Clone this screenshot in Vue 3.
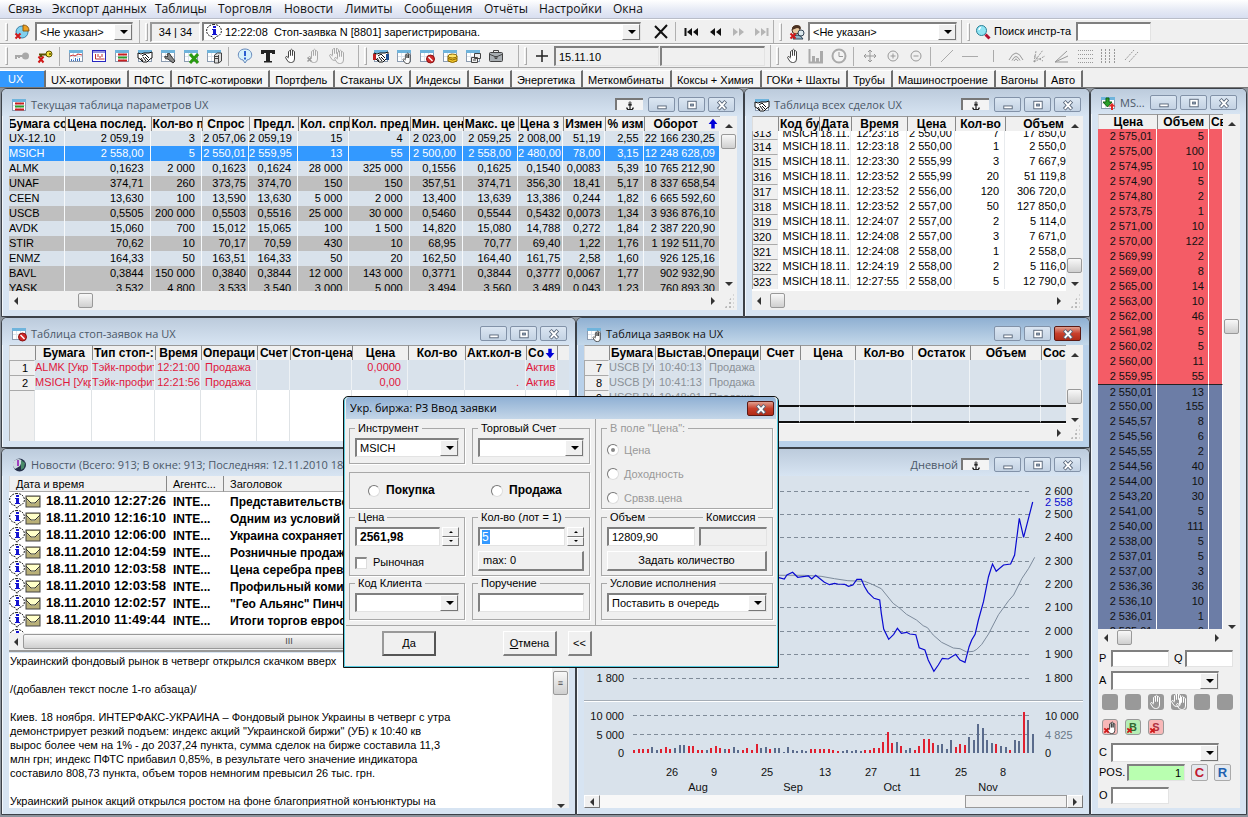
<script setup>
import { h } from 'vue'

const tbl = '<rect x="1.5" y="2.5" width="13" height="11" fill="#fff" stroke="#8b9bb0"/><path d="M5.5 5v8M9.500 5v8M2 8.500h12" stroke="#dde4ec"/><rect x="1" y="2" width="14" height="3" fill="#6fb4dc"/>'
const hand = '<path d="M5.5 9.5V3.5q1-1.5 2 0V7.5V2q1-1.5 2 0V7.5V3.5q1-1.5 2 0V11q0 3.5-3 3.5H7.5Q5 14.5 4 12L2.5 9.5q.5-1.5 1.5-.8l1.5 1.3"'
const cross = '<path d="M1.5 9.5l5 5m0-5l-5 5" stroke="#d01818" stroke-width="2" fill="none"/>'
const shake = '<path d="M1 5l3 1 3-1 5 0 3-1v6l-2 1-3 3H6l-3-3-2-1z" fill="#fff" stroke="#111"/><path d="M5 8l3-2 4 4M6 13l-2-3m5 3l-3-4m5 3l-3-3" stroke="#111" fill="none"/>'
const icons = {
  pie: '<circle cx="8" cy="8" r="6" fill="#7fd0ee" stroke="#3a7fa8"/><path d="M9 7V1q6 0 6 6z" fill="#f0a020" stroke="#8a5a10"/>' + cross,
  user: '<circle cx="7" cy="6" r="4" fill="#e8c9a0" stroke="#4a3020"/><path d="M3 6q0-5 5-5 4 0 4 4L8 4z" fill="#4a3020"/><path d="M4 15q0-4 4-4t6 4z" fill="#8fb7c9" stroke="#345"/><circle cx="12" cy="9" r="3" fill="#dce9ee" stroke="#345"/>' + cross,
  lens: '<circle cx="6.5" cy="6.5" r="5" fill="#8fe4f4" stroke="#2a7f96"/><path d="M4 6q0-2 2-2.5" stroke="#fff" stroke-width="1.5" fill="none"/><path d="M10.5 10.5l4 4" stroke="#b01030" stroke-width="3"/>',
  keyoff: '<circle cx="11.5" cy="8" r="3.5" fill="#a8a8a8"/><path d="M1 8h8M2 8v3m3-3v2" stroke="#a8a8a8" stroke-width="2"/>',
  key: '<circle cx="12" cy="6" r="3" fill="#f4e23a" stroke="#5b5200"/><circle cx="13" cy="6" r="1" fill="#5b5200"/><path d="M2 6.5h7M4 7v2" stroke="#5b5200" stroke-width="2"/><path d="M1.5 8.5l5 6m0-6l-5 6" stroke="#d01818" stroke-width="2"/>',
  chart: tbl + '<path d="M2 8l3-1 2 1 3-2 4 1" stroke="#d03030" fill="none"/><path d="M3.5 13v-2m2 2v-1m2 1v-3m2 3v-2m2 2v-3" stroke="#3a70c0"/>',
  chart2: '<rect x="1.5" y="2.5" width="13" height="11" fill="#fff" stroke="#2525c0"/><path d="M2 4h12" stroke="#2525c0"/><path d="M4.5 6v5h9M7 6v3m2-1v2m2-4v3" stroke="#c03030" fill="none"/>',
  quotes: tbl + '<path d="M4 6.5h9M4 12.5h9" stroke="#c82020" stroke-width="2"/><path d="M4 9.5h9" stroke="#2a9a2a" stroke-width="2"/>',
  deals: tbl + shake,
  dealsc: tbl + shake + '<path d="M0 6h3v6H0z" fill="#c02020"/><path d="M13 6h3v6h-3z" fill="#205090"/>',
  wrench: tbl + '<path d="M7 6q3-2 4 2l4 5-2 2-5-4q-4 0-3-3l2 1 1-1z" fill="#888" stroke="#333"/>',
  excel: tbl + '<path d="M7 6l8 9m0-9l-8 9" stroke="#2a9a10" stroke-width="3"/>',
  server: tbl + '<path d="M8.5 7l3-2h4v8l-3 2h-4z" fill="#ddd" stroke="#444"/><path d="M12.5 7v8M9 8.5h3M9 10.5h3" stroke="#444"/>',
  bubble: '<path d="M8 1C0 1-1 11 6 12l2 3 2-3C17 11 16 1 8 1z" fill="#d5f1fa" stroke="#68b"/><path d="M8 3v5M8 9.5v2" stroke="#2a5fd0" stroke-width="2"/>',
  text: '<path d="M1 2h14v4h-3V5h-2v8h2v1.5H4V13h2V5H4v1H1z" fill="#222"/>',
  hand: hand + ' fill="#fff" stroke="#444"/>',
  handoff: hand + ' fill="#f4f4f4" stroke="#aaa"/><path d="M1.5 9.5l4 4m0-4l-4 4" stroke="#999" stroke-width="1.5"/>',
  handsoff: '<g transform="translate(-2 -2)">' + hand + ' fill="#f4f4f4" stroke="#aaa"/></g><g transform="translate(3 1)">' + hand + ' fill="#f4f4f4" stroke="#aaa"/></g>',
  orders: tbl + '<g transform="translate(5 4) scale(.8)">' + hand + ' fill="#fff" stroke="#333"/></g>',
  stop: tbl + '<circle cx="11.5" cy="11" r="4" fill="#d02828" stroke="#8a1010"/><path d="M9.5 9l4 4" stroke="#fff" stroke-width="1.5"/>',
  coins: tbl + '<path d="M6 8v5q4.5 3 9 0V8z" fill="#f2c52a" stroke="#8a6500"/><ellipse cx="10.5" cy="8" rx="4.5" ry="2" fill="#ffe46a" stroke="#8a6500"/><path d="M6 10.5q4.5 3 9 0" stroke="#8a6500" fill="none"/>',
  print: tbl + '<path d="M9.5 5.5h6v5h-6zM6.5 9.5h6v5h-6z" fill="#eee" stroke="#444"/><path d="M8 12h3" stroke="#444"/>',
  bag: '<path d="M5.5 4V2.5h5V4" fill="none" stroke="#444"/><rect x="1.5" y="4.5" width="13" height="9" rx="1" fill="#a8aeb2" stroke="#444"/><path d="M1 6l7 3 7-3M7 8.5h2v2H7z" fill="none" stroke="#444"/>',
  plus: '<path d="M8 2v12M2 8h12" stroke="#222" stroke-width="1.5"/>',
  bars: '<path d="M1.5 1v13.5H15" stroke="#aaa" fill="none" stroke-width="2"/><path d="M5.5 14V8m4 6v-4m4 4V3" stroke="#aaa" stroke-width="3"/>',
  clock: '<circle cx="8" cy="8" r="6.5" fill="#f4f4f4" stroke="#aaa" stroke-width="2"/><path d="M8 4v4.5h4" stroke="#999" fill="none"/>',
  move: '<path d="M8 2v12M2 8h12M6 4l2-2 2 2M6 12l2 2 2-2M4 6L2 8l2 2M12 6l2 2-2 2" stroke="#999" fill="none"/>',
  zin: '<circle cx="8" cy="8" r="5" fill="none" stroke="#999"/><path d="M8 5.5v5M5.5 8h5" stroke="#999"/>',
  zout: '<circle cx="8" cy="8" r="5" fill="none" stroke="#999"/><path d="M5.5 8h5" stroke="#999"/>',
  l1: '<path d="M2 14L14 2" stroke="#aaa"/>',
  l2: '<path d="M0 8.5h16" stroke="#aaa"/>',
  l3: '<path d="M8.5 2v12" stroke="#aaa"/>',
  arcs: '<path d="M1 12q7-14 14 0M4 12.5q4-8 8 0M6 13q2-4 4 0" stroke="#999" fill="none"/>',
  fan1: '<path d="M3 14L12 2M3 14l2-11M3 14l11-6M3 8l9 5" stroke="#999" fill="none" stroke-dasharray="2 1"/>',
  fan2: '<path d="M1 14L13 3M1 14l13-6M1 14h13" stroke="#999" fill="none"/>',
  hl: '<path d="M1 2.5h15M1 6.5h15M1 10.5h15M1 14.5h15" stroke="#999" stroke-dasharray="1 1"/>',
  vl: '<path d="M1.5 1v14M5.5 1v14M9.5 1v14M14.5 1v14" stroke="#999" stroke-dasharray="2 1"/>',
  sl: '<path d="M2 12L11 2M6 14L15 4" stroke="#999" stroke-dasharray="2 1"/>',
  x: '<path d="M2 2l12 12M14 1L2 14" stroke="#111" stroke-width="2"/>',
  first: '<path d="M1.5 4v8" stroke="#111" stroke-width="2"/><path d="M8 4v8L3 8zM14 4v8L9 8z" fill="#111"/>',
  prev: '<path d="M8 4v8L3 8zM14 4v8L9 8z" fill="#111"/>',
  next: '<path d="M3 4v8l5-4zM9 4v8l5-4z" fill="#b5b5b5"/>',
  last: '<path d="M2 4v8l5-4zM8 4v8l5-4z" fill="#b5b5b5"/><path d="M14.5 4v8" stroke="#b5b5b5" stroke-width="2"/>',
  info: '<path d="M8 .5C-1 .5-2 11.500 6 12.500l2 3 2-3C18 11.500 17 .5 8 .5z" fill="#fff" stroke="#222" stroke-dasharray="2 1"/><path d="M7 2h3v2H7zM6 5h4v5h1v1H6v-1h1V6H6z" fill="#1515d0"/>',
  mail: '<rect x="1" y="3" width="14" height="11" fill="#b9b078" stroke="#444"/><path d="M2 4h12v3l-5 4H7L2 7z" fill="#ffffc8"/><path d="M1 5l5 5h4l5-5" stroke="#333" fill="none"/>',
  globe: '<circle cx="8.5" cy="8" r="6.5" fill="#26304a"/><path d="M3 4q5-4 8 0L9 9 4 12Q0 8 3 4z" fill="#cfd8e2"/><path d="M10 3l4 3-1 5-3 2z" fill="#4a8a6a"/><path d="M7 3v6" stroke="#a040c0" stroke-width="2"/>',
  glass: tbl + '<path d="M6 3h3v4h3l-4.500 5L3 7h3z" fill="#28a028" stroke="#126012"/><path d="M12 8l3.500 3.500H13V15h-2v-3.500H8.500z" fill="#e02828"/>',
  anchor: '<path d="M8 5v8M5.5 6.5h5M3.5 10q1 3.5 4.5 3.5t4.5-3.5" stroke="#111" stroke-width="1.5" fill="none"/><circle cx="8" cy="4" r="1.5" fill="none" stroke="#111"/>',
  min: '<rect x="3.5" y="8.5" width="9" height="3" fill="#fff" stroke="#59677a"/>',
  max: '<rect x="3.5" y="3.5" width="9" height="8" fill="#fff" stroke="#59677a"/><rect x="6.5" y="6.5" width="3" height="2" fill="#9db0c6" stroke="#59677a"/>',
  close: '<path d="M4 3.5l8 8.5m0-8.5L4 12" stroke="#59677a" stroke-width="4"/><path d="M4.5 4l7 7.5m0-7.5l-7 7.5" stroke="#fff" stroke-width="2"/>',
  up: '<path d="M8 2l5 6h-3v5H6V8H3z" fill="#0000d8"/>',
  down: '<path d="M8 14l5-6h-3V3H6v5H3z" fill="#0000d8"/>',
  k1: hand + ' fill="none" stroke="#fff"/>',
  k2: '<g transform="translate(-2 -2)">' + hand + ' fill="none" stroke="#fff"/></g><g transform="translate(3 1)">' + hand + ' fill="none" stroke="#fff"/></g>',
  kill: '<g transform="translate(2 1)">' + hand + ' fill="#fff" stroke="#333"/></g>' + cross,
  cross
}
const Ico = (p) => h('svg', { viewBox: '0 0 16 16', class: 'ico', 'aria-hidden': 'true', innerHTML: icons[p.n] })
Ico.props = ['n']

const menu = ['Связь', 'Экспорт данных', 'Таблицы', 'Торговля', 'Новости', 'Лимиты', 'Сообщения', 'Отчёты', 'Настройки', 'Окна']
const tabs = ['UX', 'UX-котировки', 'ПФТС', 'ПФТС-котировки', 'Портфель', 'Стаканы UX', 'Индексы', 'Банки', 'Энергетика', 'Меткомбинаты', 'Коксы + Химия', 'ГОКи + Шахты', 'Трубы', 'Машиностроение', 'Вагоны', 'Авто']
const toolsA = [['keyoff', 'key'], ['chart', 'chart2', 'quotes', 'deals', 'wrench', 'excel', 'server'], ['bubble', 'text', 'hand', 'handoff', 'handsoff']]
const toolsB = ['dealsc', 'orders', 'stop', 'coins', 'print', 'bag']
const toolsC = [['hand', 'bars', 'clock'], ['move', 'zin', 'zout'], ['l1', 'l2', 'l3', 'arcs', 'fan1', 'fan2', 'hl', 'vl', 'sl']]
const winButtons = ['min', 'max', 'close']

const quoteCols = [56, 85, 51, 47, 49, 51, 60, 53, 55, 45, 42, 38, 76]
const quoteHead = ['Бумага со', 'Цена послед.', 'Кол-во п', 'Спрос', 'Предл.', 'Кол. спр', 'Кол. пред', 'Мин. цен', 'Макс. це', 'Цена з', 'Измен', '% изм', 'Оборот']
const quotes = `UX-12.10|2 059,19|3|2 057,06|2 059,19|15|4|2 023,00|2 059,25|2 008,00|51,19|2,55|22 166 230,25
MSICH|2 558,00|5|2 550,01|2 559,95|13|55|2 500,00|2 558,00|2 480,00|78,00|3,15|12 248 628,09
ALMK|0,1623|2 000|0,1623|0,1624|28 000|325 000|0,1556|0,1625|0,1540|0,0083|5,39|10 765 212,90
UNAF|374,71|260|373,75|374,70|150|150|357,51|374,71|356,30|18,41|5,17|8 337 658,54
CEEN|13,630|100|13,590|13,630|5 000|2 000|13,400|13,639|13,386|0,244|1,82|6 665 592,60
USCB|0,5505|200 000|0,5503|0,5516|25 000|30 000|0,5460|0,5544|0,5432|0,0073|1,34|3 936 876,10
AVDK|15,060|700|15,012|15,065|100|1 500|14,820|15,080|14,788|0,272|1,84|2 387 220,90
STIR|70,62|10|70,17|70,59|430|10|68,95|70,77|69,40|1,22|1,76|1 192 511,70
ENMZ|164,33|50|163,51|164,33|50|20|162,50|164,40|161,75|2,58|1,60|926 125,16
BAVL|0,3844|150 000|0,3840|0,3844|12 000|143 000|0,3771|0,3844|0,3777|0,0067|1,77|902 932,90
YASK|3,532|4 800|3,533|3,540|3 000|5 000|3,494|3,560|3,489|0,043|1,23|760 893,30`.split('\n').map(r => r.split('|'))

const dealCols = [26, 41, 32, 56, 48, 50, 63]
const dealHead = ['', 'Код бу', 'Дата', 'Время', 'Цена', 'Кол-во', 'Объем']
const deals = `313|12:23:18|2 550,00|7|17 850,00
314|12:23:18|2 550,00|1|2 550,00
315|12:23:30|2 555,99|3|7 667,97
316|12:23:52|2 555,99|20|51 119,80
317|12:23:52|2 556,00|120|306 720,00
318|12:23:52|2 557,00|50|127 850,00
319|12:24:07|2 557,00|2|5 114,00
320|12:24:08|2 557,00|3|7 671,00
321|12:24:08|2 558,00|1|2 558,00
322|12:24:19|2 558,00|2|5 116,00
323|12:27:55|2 558,00|5|12 790,00`.split('\n').map(r => { const [n, ...x] = r.split('|'); return [n, 'MSICH', '18.11.', ...x] })

const stopCols = [26, 57, 63, 46, 56, 33, 62, 56, 57, 61, 31, 14]
const stopHead = ['', 'Бумага', 'Тип стоп-:', 'Время', 'Операци', 'Счет', 'Стоп-цена', 'Цена', 'Кол-во', 'Акт.кол-в', 'Со', '']
const stops = [
  ['1', 'ALMK [Укр', 'Тэйк-профит', '12:21:00', 'Продажа', '', '', '0,0000', '', '', 'Актив', ''],
  ['2', 'MSICH [Укр', 'Тэйк-профит', '12:21:56', 'Продажа', '', '', '0,00', '', '.', 'Актив', '']
]
const orderCols = [25, 46, 50, 55, 40, 55, 57, 58, 71, 27]
const orderHead = ['', 'Бумага', 'Выстав.', 'Операци', 'Счет', 'Цена', 'Кол-во', 'Остаток', 'Объем', 'Сос']
const orders = [['7', '10:40:13'], ['8', '10:41:13'], ['9', '10:48:01']].map(([n, t]) => [n, 'USCB [Укр', t, 'Продажа', '', '', '', '', '', ''])

const news = [['12:27:26', 'Представительство'], ['12:16:10', 'Одним из условий'], ['12:06:00', 'Украина сохраняет'], ['12:04:59', 'Розничные продажи'], ['12:03:58', 'Цена серебра превысила'], ['12:03:58', 'Профильный комитет'], ['12:02:57', '"Гео Альянс" Пинчука'], ['11:49:44', 'Итоги торгов евросоюза']]

const asks = '2 575,01|5 2 575,00|100 2 574,95|10 2 574,90|5 2 574,80|2 2 573,75|1 2 571,00|10 2 570,00|122 2 569,99|2 2 569,00|8 2 565,00|14 2 563,00|10 2 562,00|46 2 561,98|5 2 560,02|5 2 560,00|11 2 559,95|55'
const bids = '2 550,01|13 2 550,00|155 2 545,57|8 2 545,56|6 2 545,55|2 2 544,56|40 2 544,00|10 2 543,20|30 2 541,00|5 2 540,00|111 2 538,00|5 2 537,01|5 2 537,00|3 2 536,36|36 2 536,10|10 2 536,01|1 2 535,01|6'
const levels = (s) => s.match(/2 \d{3},\d\d\|\d+/g).map(r => r.split('|'))
const book = [...levels(asks).map(r => [...r, 'ask']), ...levels(bids).map(r => [...r, 'bid'])]

// Chart geometry, in the units of the SVG view box
const px = (x) => 570 + x / 2.987
const py = (y) => 445 + y / 3
const line = (s) => s.split(' ').map(p => { const [x, y] = p.split(','); return px(+x).toFixed(1) + ',' + py(+y).toFixed(1) }).join(' ')
const price = line('624,398 640,402 648,390 665,382 680,397 712,393 722,402 734,391 745,400 760,412 775,419 790,415 800,417 820,418 832,424 845,420 857,403 870,403 880,425 890,442 908,460 925,465 930,505 937,552 952,583 967,568 978,550 990,565 1005,562 1015,567 1033,569 1043,608 1060,615 1070,645 1087,679 1100,660 1112,640 1130,642 1152,628 1165,645 1180,652 1192,605 1200,585 1210,568 1220,525 1235,470 1250,395 1262,357 1273,379 1295,360 1316,357 1328,330 1342,220 1355,277 1382,171')
const average = line('624,391 700,391 750,394 790,401 830,407 880,409 905,419 930,431 945,450 965,475 985,490 1005,508 1035,525 1055,542 1068,548 1085,570 1110,592 1145,609 1165,611 1185,621 1205,619 1215,613 1230,598 1250,567 1280,509 1310,467 1325,450 1350,400 1370,370 1388,337')
const volumes = 'r10 r12 r12 r12 g17 g8 r12 r17 r12 g16 g23 g23 r20 r20 r10 r10 g8 r16 r20 r16 g13 r12 g17 g8 r10 r14 r8 r26 g14 g17 r12 g14 g14 g4 g17 g8 g5 g8 g5 r12 r12 r12 r12 r12 r8 r5 g5 g8 g5 g8 g5 r8 r8 r14 r14 r32 r62 r30 g32 r20 g8 g14 r8 r22 r43 r42 r30 g23 g28 g12 g40 r17 r28 r24 g48 g40 g86 g74 g40 g30 r28 g22 g18 r10 g38 g36 r122 g98 g57'.split(' ')
  .map((v, i, a) => ({ x: Math.round(px(192 + i * 1190 / (a.length - 1))) - 1, h: Math.max(1, Math.round(v.slice(1) / 3)), c: v[0] === 'r' ? '#e02030' : '#5a6b8c' }))
const scale = [[491, '2 600'], [514, '2 500'], [537, '2 400'], [561, '2 300'], [584, '2 200'], [607, '2 100'], [631, '2 000'], [654, '1 900'], [678, '1 800']]
const days = [[672, '26'], [714, '9'], [767, '25'], [825, '13'], [871, '27'], [915, '11'], [961, '25'], [1003, '8']]
const months = [[698, 'Aug'], [793, 'Sep'], [892, 'Oct'], [988, 'Nov']]
</script>

<template>
  <div class="app">
    <nav class="menu"><a v-for="m in menu" :key="m" href="#">{{ m }}</a></nav>

    <div class="bar">
      <div class="group g1"><i class="grip"></i><button class="tool" aria-label="Фирма"><Ico n="pie" /></button>
        <span class="combo"><select aria-label="Фирма"><option>&lt;Не указан&gt;</option></select></span></div>
      <div class="group g2"><i class="grip"></i><span class="count">34 | 34</span>
        <span class="combo msg"><Ico n="info" /><select aria-label="Сообщения"><option>12:22:08&nbsp; Стоп-заявка N [8801] зарегистрирована.</option></select></span>
        <button class="tool del" aria-label="Удалить"><Ico n="x" /></button><i class="sep"></i>
        <button v-for="b in ['first', 'prev', 'next', 'last']" :key="b" class="tool" :aria-label="b"><Ico :n="b" /></button></div>
      <div class="group g3"><i class="grip"></i><button class="tool" aria-label="Клиент"><Ico n="user" /></button>
        <span class="combo"><select aria-label="Клиент"><option>&lt;Не указан&gt;</option></select></span></div>
      <div class="group g4"><i class="grip"></i><Ico n="lens" /><label for="find">Поиск инстр-та</label><input id="find" class="field"></div>
    </div>

    <div class="bar second">
      <div class="group t1"><i class="grip"></i>
        <template v-for="(g, i) in toolsA" :key="i"><i v-if="i" class="sep"></i><button v-for="t in g" :key="t" class="tool" :aria-label="t"><Ico :n="t" /></button></template>
      </div>
      <div class="group t2"><i class="grip"></i><button v-for="t in toolsB" :key="t" class="tool" :aria-label="t"><Ico :n="t" /></button></div>
      <div class="group t3"><i class="grip"></i><button class="tool" aria-label="plus"><Ico n="plus" /></button>
        <input class="field gray" aria-label="Дата" value="15.11.10"><input class="field gray" aria-label="Значение"></div>
      <div class="group t4"><i class="grip"></i>
        <template v-for="(g, i) in toolsC" :key="i"><i v-if="i" class="sep"></i><button v-for="t in g" :key="t" class="tool" :aria-label="t"><Ico :n="t" /></button></template>
      </div>
    </div>

    <div class="tabs"><button v-for="(t, i) in tabs" :key="t" :class="{ on: !i }">{{ t }}</button></div>

    <main class="desk">
      <div class="left">
        <div class="row r1">
          <section class="win wide">
            <header><Ico n="quotes" /><h2>Текущая таблица параметров UX</h2><span class="pin"><Ico n="anchor" /></span>
              <button v-for="b in winButtons" :key="b" class="wb" :aria-label="b"><Ico :n="b" /></button></header>
            <div class="body">
              <div class="pane">
                <div class="clip">
                  <table class="quotes">
                    <colgroup><col v-for="(w, i) in quoteCols" :key="i" :style="{ width: w + 'px' }"></colgroup>
                    <thead><tr><th v-for="(t, i) in quoteHead" :key="i"><div :class="{ mid: [0, 3, 4].includes(i), sort: i === 12 }">{{ t }}<Ico v-if="i === 12" n="up" /></div></th></tr></thead>
                    <tbody><tr v-for="(r, i) in quotes" :key="i" :class="{ sel: i === 1, alt: i > 2 && i % 2 || i === 10 }"><td v-for="(c, j) in r" :key="j"><div>{{ c }}</div></td></tr></tbody>
                  </table>
                </div>
                <div class="hs"><i class="al"></i><i class="th a1"></i><i class="ar"></i></div>
              </div>
              <div class="vs"><i class="au"></i><i class="th v1"></i><i class="ad"></i><i class="size"></i></div>
            </div>
          </section>
          <section class="win">
            <header><Ico n="deals" /><h2>Таблица всех сделок UX</h2><span class="pin"><Ico n="anchor" /></span>
              <button v-for="b in winButtons" :key="b" class="wb" :aria-label="b"><Ico :n="b" /></button></header>
            <div class="body">
              <div class="pane">
                <div class="clip white">
                  <table class="deals">
                    <colgroup><col v-for="(w, i) in dealCols" :key="i" :style="{ width: w + 'px' }"></colgroup>
                    <thead><tr><th v-for="(t, i) in dealHead" :key="i"><div :class="{ mid: i > 2 && i < 6, end: i === 6 }">{{ t }}</div></th></tr></thead>
                    <tbody><tr v-for="r in deals" :key="r[0]"><td v-for="(c, j) in r" :key="j"><div>{{ c }}</div></td></tr></tbody>
                  </table>
                </div>
                <div class="hs"><i class="al"></i><i class="th"></i><i class="ar"></i></div>
              </div>
              <div class="vs"><i class="au"></i><i class="th v2"></i><i class="ad"></i><i class="size"></i></div>
            </div>
          </section>
        </div>

        <div class="row r2">
          <section class="win narrow">
            <header><Ico n="stop" /><h2>Таблица стоп-заявок на UX</h2>
              <button v-for="b in winButtons" :key="b" class="wb" :aria-label="b"><Ico :n="b" /></button></header>
            <div class="body">
              <div class="clip white">
                <table class="stops">
                  <colgroup><col v-for="(w, i) in stopCols" :key="i" :style="{ width: w + 'px' }"></colgroup>
                  <thead><tr><th v-for="(t, i) in stopHead" :key="i"><div :class="{ mid: [1, 3, 5, 7, 8].includes(i), sort: i === 10 }">{{ t }}<Ico v-if="i === 10" n="down" /></div></th></tr></thead>
                  <tbody><tr v-for="r in stops" :key="r[0]"><td v-for="(c, j) in r" :key="j"><div>{{ c }}</div></td></tr>
                    <tr class="rest"><td v-for="j in 12" :key="j"></td></tr></tbody>
                </table>
              </div>
            </div>
          </section>
          <section class="win active">
            <header><Ico n="orders" /><h2>Таблица заявок на UX</h2>
              <button v-for="b in winButtons" :key="b" class="wb" :class="{ red: b === 'close' }" :aria-label="b"><Ico :n="b" /></button></header>
            <div class="body">
              <div class="pane">
                <div class="clip white">
                  <table class="orders">
                    <colgroup><col v-for="(w, i) in orderCols" :key="i" :style="{ width: w + 'px' }"></colgroup>
                    <thead><tr><th v-for="(t, i) in orderHead" :key="i"><div :class="{ mid: i > 3 && i < 9, sort: i === 9 }">{{ t }}<Ico v-if="i === 9" n="down" /></div></th></tr></thead>
                    <tbody><tr v-for="r in orders" :key="r[0]"><td v-for="(c, j) in r" :key="j"><div>{{ c }}</div></td></tr>
                      <tr class="mark"><td v-for="j in 10" :key="j"><div></div></td></tr></tbody>
                  </table>
                </div>
                <div class="hs"><i class="al"></i><i class="th"></i><i class="ar"></i></div>
              </div>
              <div class="vs"><i class="au"></i><i class="th v4"></i><i class="ad"></i><i class="size"></i></div>
            </div>
          </section>
        </div>

        <div class="row r3">
          <section class="win narrow news">
            <header><Ico n="globe" /><h2>Новости (Всего: 913; В окне: 913; Последняя: 12.11.2010 18:52)</h2></header>
            <div class="col">
              <div class="list">
                <table>
                  <colgroup><col class="c1"><col class="c2"><col></colgroup>
                  <thead><tr><th>Дата и время</th><th>Агентс...</th><th>Заголовок</th></tr></thead>
                  <tbody><tr v-for="(n, i) in news" :key="i"><td><div><Ico n="info" /><Ico n="mail" /><time>18.11.2010 {{ n[0] }}</time></div></td><td>INTE...</td><td>{{ n[1] }}</td></tr>
                    <tr><td><div><Ico n="info" /></div></td><td></td><td></td></tr></tbody>
                </table>
              </div>
              <div class="hs"><i class="al"></i><i class="th long">III</i><i class="ar"></i></div>
              <div class="story">
                <article>
                  <p>Украинский фондовый рынок в четверг открылся скачком вверх</p>
                  <p>/(добавлен текст после 1-го абзаца)/</p>
                  <p>Киев. 18 ноября. ИНТЕРФАКС-УКРАИНА – Фондовый рынок Украины в четверг с утра<br>демонстрирует резкий подъем: индекс акций "Украинской биржи" (УБ) к 10:40 кв<br>вырос более чем на 1% - до 2037,24 пункта, сумма сделок на бирже составила 11,3<br>млн грн; индекс ПФТС прибавил 0,85%, в результате чего значение индикатора<br>составило 808,73 пункта, объем торов немногим превысил 26 тыс. грн.</p>
                  <p>Украинский рынок акций открылся ростом на фоне благоприятной конъюнктуры на</p>
                </article>
                <div class="vs"><i class="au"></i><i class="th v5">≡</i><i class="ad"></i></div>
              </div>
            </div>
          </section>
          <section class="win chart">
            <header><h2></h2><span class="mode">Дневной</span><span class="pin"><Ico n="anchor" /></span>
              <button v-for="b in winButtons" :key="b" class="wb" :aria-label="b"><Ico :n="b" /></button></header>
            <div class="col">
              <svg class="plot" viewBox="584 476 499 318" preserveAspectRatio="xMinYMin meet">
                <g class="dash"><path v-for="s in scale" :key="s[0]" :d="`M633 ${s[0] + .5}H1032`" /><path d="M633 715.5H1032M633 734.5H1032" /></g>
                <text v-for="s in scale" :key="s[1]" x="1045" :y="s[0] + 4">{{ s[1] }}</text>
                <rect x="1043" y="495" width="38" height="13" fill="#d9e2eb" /><text x="1045" y="506" class="now">2 558</text>
                <text x="624" y="682" class="r">1 800</text>
                <polyline :points="average" stroke="#7d8b9c" /><polyline :points="price" stroke="#0a0ad0" stroke-width="1.2" />
                <path d="M584 700.5H1083" stroke="#a5adb6" /><path d="M584 701.5H1083" stroke="#fff" />
                <text x="624" y="720" class="r">10 000</text><text x="624" y="739" class="r">5 000</text><text x="624" y="757" class="r">0</text>
                <text x="1045" y="720">10 000</text><text x="1045" y="739" class="dim">4 825</text><text x="1045" y="757">0</text>
                <rect v-for="(v, i) in volumes" :key="i" :x="v.x" :y="753 - v.h" width="2" :height="v.h" :fill="v.c" />
                <text v-for="d in days" :key="d[0]" :x="d[0]" y="776" class="m">{{ d[1] }}</text>
                <text v-for="d in months" :key="d[1]" :x="d[0]" y="791" class="m">{{ d[1] }}</text>
              </svg>
              <div class="hs classic"><i class="bx"><i class="al"></i></i><i class="th"></i><i class="bx"><i class="ar"></i></i></div>
            </div>
          </section>
        </div>
      </div>

      <section class="win book">
        <header><Ico n="glass" /><h2>MS...</h2>
          <button v-for="b in winButtons" :key="b" class="wb" :aria-label="b"><Ico :n="b" /></button></header>
        <div class="body depth">
          <div class="clip">
            <table>
              <colgroup><col class="b1"><col class="b2"><col class="b3"></colgroup>
              <thead><tr><th><div class="mid">Цена</div></th><th><div class="mid">Объем</div></th><th><div>Св</div></th></tr></thead>
              <tbody><tr v-for="(r, i) in book" :key="i" :class="r[2]"><td><div>{{ r[0] }}</div></td><td><div>{{ r[1] }}</div></td><td></td></tr></tbody>
            </table>
          </div>
          <div class="vs"><i class="au"></i><i class="th v6"></i><i class="ad"></i></div>
        </div>
        <div class="entry">
          <div class="hs"><i class="al"></i><i class="th"></i><i class="ar"></i></div>
          <div class="ln"><label for="fp">P</label><input id="fp" class="field w58"><label for="fq" class="q">Q</label><input id="fq" class="field w48"></div>
          <div class="ln a"><label for="fa">A</label><span class="combo w108"><select id="fa"><option></option></select></span></div>
          <div class="keys"><button v-for="i in 6" :key="i" :aria-label="'Кнопка ' + i"><Ico v-if="i === 3" n="k1" /><Ico v-if="i === 4" n="k2" /></button></div>
          <div class="keys small"><button class="p" aria-label="Снять"><Ico n="kill" /></button><button class="g">B<Ico n="cross" class="over" /></button><button class="p">S<Ico n="cross" class="over" /></button></div>
          <div class="ln c"><label for="fc">C</label><span class="combo w108"><select id="fc"><option></option></select></span></div>
          <div class="ln pos"><label for="fpos">POS.</label><input id="fpos" class="field w58 green" value="1"><button class="cr red">C</button><button class="cr blue">R</button></div>
          <div class="ln"><label for="fo">O</label><input id="fo" class="field w58"></div>
        </div>
      </section>
    </main>

    <form class="dialog" @submit.prevent>
      <header><h2>Укр. биржа: РЗ Ввод заявки</h2><button type="button" class="wb red" aria-label="Закрыть"><Ico n="close" /></button></header>
      <div class="dbody">
        <div class="dleft">
          <fieldset><legend><label for="ins">Инструмент</label></legend><span class="combo"><select id="ins"><option>MSICH</option></select></span></fieldset>
          <fieldset><legend><label for="acc">Торговый Счет</label></legend><span class="combo"><select id="acc"><option></option></select></span></fieldset>
          <div class="side"><label><input type="radio" name="side">Покупка</label><label><input type="radio" name="side">Продажа</label></div>
          <fieldset class="tall"><legend><label for="pr">Цена</label></legend>
            <div class="spin"><input id="pr" class="field b" value="2561,98"><span class="ud"><button type="button" aria-label="Больше"></button><button type="button" class="dn" aria-label="Меньше"></button></span></div>
            <label class="check"><input type="checkbox">Рыночная</label></fieldset>
          <fieldset class="tall"><legend><label for="qt">Кол-во (лот = 1)</label></legend>
            <div class="spin"><span class="field qty"><input id="qt" value="5"></span><span class="ud"><button type="button" aria-label="Больше"></button><button type="button" class="dn" aria-label="Меньше"></button></span></div>
            <button type="button" class="btn lft">max: 0</button></fieldset>
          <fieldset class="last"><legend><label for="cl">Код Клиента</label></legend><span class="combo"><select id="cl"><option></option></select></span></fieldset>
          <fieldset class="last"><legend><label for="rf">Поручение</label></legend><input id="rf" class="field"></fieldset>
        </div>
        <div class="dright">
          <fieldset class="kinds" disabled><legend>В поле "Цена":</legend>
            <label><input type="radio" name="kind" checked>Цена</label><label><input type="radio" name="kind">Доходность</label><label><input type="radio" name="kind">Срвзв.цена</label></fieldset>
          <fieldset class="vol"><legend><label for="vo">Объем</label></legend>
            <label class="com" for="co">Комиссия</label>
            <div class="two"><input id="vo" class="field" value="12809,90"><input id="co" class="field gray"></div>
            <button type="button" class="btn">Задать количество</button></fieldset>
          <fieldset class="last"><legend><label for="us">Условие исполнения</label></legend><span class="combo"><select id="us"><option>Поставить в очередь</option></select></span></fieldset>
        </div>
      </div>
      <footer><button class="btn ok"><u>Д</u>а</button><button type="button" class="btn"><u>О</u>тмена</button><button type="button" class="btn less">&lt;&lt;</button></footer>
    </form>
  </div>
</template>

<style>
body { margin: 0; background: #8d949c; }
</style>

<style scoped>
.app { position: relative; height: 100vh; display: flex; flex-direction: column; overflow: hidden; background: #f0f0f0; font: 11px/13px "Liberation Sans", Arial, sans-serif; color: #000; }
.app * { box-sizing: border-box; }
button, input, select { font: inherit; color: inherit; margin: 0; padding: 0; border: 0; border-radius: 0; background: none; min-width: 0; }
h2 { margin: 0; font: inherit; flex: 1; white-space: nowrap; overflow: hidden; }
i { display: block; font-style: normal; }
.ico { width: 16px; height: 16px; flex: none; display: block; }

.menu { flex: none; height: 19px; display: grid; grid-template-columns: 44px 103px 63px 66px 61px 59px 80px 55px 74px auto; padding-left: 8px; align-items: center; background: linear-gradient(#fff, #e8ecf6 50%, #d8def0); border-bottom: 1px solid #b9bdc8; font: 12px/16px "Open Sans", "Noto Sans", sans-serif; }
.menu a { color: #111; text-decoration: none; white-space: nowrap; }
.bar { flex: none; height: 25px; display: flex; border-bottom: 1px solid #a8a8a8; border-top: 1px solid #fff; }
.second { height: 24px; }
.group { display: flex; align-items: center; border-right: 1px solid #b0b0b0; padding-left: 5px; }
.grip { flex: none; width: 3px; height: 18px; border: 1px solid #aaa; border-top-color: #fff; border-left-color: #fff; margin-right: 2px; }
.sep { flex: none; width: 1px; height: 19px; background: #b0b0b0; margin: 0 4px 0 3px; }
.tool { flex: none; width: 23px; height: 22px; display: grid; place-items: center; }
.g1 { width: 140px; } .g1 .combo { width: 98px; margin-left: 2px; }
.g2 { width: 634px; } .del { margin-left: 8px; }
.count { width: 50px; height: 20px; line-height: 17px; text-align: center; border: solid; border-color: #999 #fff #fff #999; border-width: 2px 1px 1px 2px; margin-right: 2px; }
.msg { width: 439px; padding-left: 2px; }
.g3 { width: 188px; } .g3 .tool { margin-left: 1px; } .g3 .combo { width: 149px; }
.g4 { flex: 1; border: 0; gap: 3px; } .g4 .field { width: 75px; margin-left: 2px; } .g4 label { white-space: nowrap; }
.t1 { width: 359px; } .t2 { width: 160px; } .t3 { width: 252px; gap: 1px; } .t4 { flex: 1; border: 0; }
.t3 .field { width: 105px; height: 20px; }

.field { height: 19px; padding: 0 3px; background: #fff; border: solid; border-width: 2px 1px 1px 2px; border-color: #808080 #e3e3e3 #e3e3e3 #808080; }
.field.gray { background: #f0f0f0; }
.combo { position: relative; display: flex; height: 19px; background: #fff; border: solid; border-width: 2px 1px 1px 2px; border-color: #808080 #e3e3e3 #e3e3e3 #808080; }
.combo select { appearance: none; flex: 1; padding: 0 18px 0 3px; outline: 0; }
.combo::before { content: ""; position: absolute; right: 0; top: 0; bottom: 0; width: 16px; background: #f0f0f0; border: 1px solid; border-color: #fff #777 #777 #fff; pointer-events: none; }
.combo::after { content: ""; position: absolute; right: 4px; top: 6px; border: 4px solid transparent; border-top-color: #000; border-bottom: 0; pointer-events: none; }

.tabs { flex: none; display: flex; height: 20px; padding-top: 2px; border-bottom: 1px solid #777; }
.tabs button { text-align: left; padding: 3px 6px 0 5px; border-right: 2px solid #6f6f6f; white-space: nowrap; border-top: 1px solid #fff; background: #f4f4f4; }
.tabs .on { background: #3399ff; color: #fff; width: 46px; padding: 0 8px; }

.desk { flex: 1; min-height: 0; display: flex; padding: 0 1px 2px 1px; background: #8d949c; }
.left { flex: 1; min-width: 0; display: flex; flex-direction: column; }
.row { display: flex; min-height: 0; }
.r1 { flex: 0 0 229px; } .r2 { flex: 0 0 131px; } .r3 { flex: 1; }
.win { flex: 1; min-width: 0; display: flex; flex-direction: column; background: #d7e4f2; border: 1px solid #3c4148; border-radius: 6px 6px 0 0; padding: 0 6px 6px 7px; box-shadow: inset 1px 1px #f2f7fc; overflow: hidden; }
.wide { flex: 0 0 743px; } .narrow { flex: 0 0 575px; } .book { flex: 0 0 157px; }
.win > header { flex: none; height: 27px; padding: 4px 8px 0 9px; display: flex; align-items: center; gap: 3px; margin: 0 -6px 0 -7px; background: linear-gradient(#bccbdc, #d7e4f2); color: #4b5868; font: 11px/16px "Open Sans", "Noto Sans", sans-serif; }
.win > header h2 { padding-left: 1px; }
.active > header { background: linear-gradient(#8fb0d2, #c4d8ea); color: #111; }
.active { background: #b9d1ea; }
.wb { flex: none; width: 27px; height: 15px; display: grid; place-items: center; border: 1px solid #8292a8; border-radius: 2px; background: linear-gradient(#dbe6f2, #c3d2e3); }
.wb .ico { height: 15px; }
.wb.red { background: linear-gradient(#e0a090, #c8402c 50%, #b02c18); border-color: #5c1a14; }
.pin { flex: none; width: 28px; height: 12px; align-self: flex-start; margin: 5px 2px 0 0; background: #f4f4f4; border-top: 2px solid #777; border-left: 2px solid #777; display: grid; place-items: center; overflow: hidden; }
.pin .ico { width: 12px; height: 12px; }
.body { flex: 1; min-height: 0; display: flex; }
.pane, .col { flex: 1; min-width: 0; min-height: 0; display: flex; flex-direction: column; }
.clip { flex: 1; min-height: 0; min-width: 0; overflow: hidden; background: #d9e2eb; }
.white { background: #fff; }

table { border-collapse: separate; border-spacing: 0; table-layout: fixed; width: 100%; }
th, td { padding: 0; height: 15px; }
th { background: #f0f0f0; border-left: 1px solid #888; border-top: 1px solid #999; font-size: 12px; line-height: 14px; text-align: left; }
th:first-child { border-left-color: #ddd; }
th div { height: 14px; overflow: hidden; white-space: nowrap; padding-left: 1px; }
th .mid { display: flex; justify-content: center; padding: 0; }
th .end { text-align: right; padding-right: 4px; }
th .sort { display: flex; justify-content: space-between; } th .sort .ico { width: 14px; height: 14px; margin-left: auto; }
td div { height: 15px; line-height: 15px; overflow: hidden; white-space: nowrap; text-align: right; padding-right: 6px; }
.quotes th:last-child div { padding-left: 9px; }
.quotes td { background: #d9e2eb; border-right: 1px solid #f6f9fb; }
.quotes .alt td { background: #bfbfbf; }
.quotes .sel td { background: #3399ff; color: #fff; }
.quotes td:first-child div { text-align: left; padding: 0; }
.quotes td:nth-child(n+10) div, .quotes td:nth-child(4) div { padding-right: 4px; }
.quotes td:nth-child(10) div, .quotes td:nth-child(4) div { padding-right: 2px; }
.deals td { border-right: 1px solid #e8ebee; }
.deals td div { padding: 0 5px 0 2px; }
.deals td:first-child, .stops td:first-child, .orders td:first-child { background: #f0f0f0; border-left: 1px solid #aaa; border-top: 1px solid #aaa; height: 15px; }
.deals td:first-child div { height: 14px; line-height: 14px; text-align: left; padding: 0; }
.deals td:nth-child(2) div { text-align: right; padding: 0; }
.deals td:nth-child(3) div { text-align: left; padding: 0 0 0 1px; }
.deals td:nth-child(4) div { padding-right: 7px; }
.deals td:last-child { border: 0; } .deals td:last-child div { padding: 0; margin-right: -4px; }
.deals tbody tr:first-child td { height: 8px; border-top: 0; } .deals tbody tr:first-child td div { height: 8px; line-height: 4px; }
.stops td { background: #d9e2eb; border-right: 1px solid #eef2f5; color: #e0183c; }
.stops td:first-child div, .orders td:first-child div { height: 14px; line-height: 14px; padding-right: 6px; }
.stops td:first-child { color: #000; }
.stops td:nth-child(2) div, .stops td:nth-child(3) div, .stops td:nth-child(11) div, .orders td:nth-child(2) div { text-align: left; padding: 0; }
.stops td:nth-child(5) div, .orders td:nth-child(3) div, .orders td:nth-child(4) div { text-align: left; padding: 0 0 0 4px; }
.stops td:nth-child(4) div { padding: 0; }
.stops .rest td { height: 52px; background: #fff; border-right-color: #dfe3e6; }
.stops .rest td:first-child { background: #f0f0f0; }
.stops th .sort .ico { margin-left: -2px; }
.orders td { background: #d9e2eb; border-right: 1px solid #f0f4f7; color: #8b9197; }
.orders td:first-child { color: #000; }
.orders .mark td { border-top: 2px solid #111; border-bottom: 2px solid #111; height: 16px; }
.orders .mark div { height: 12px; }

.hs { flex: none; height: 17px; background: #f0f0f0; display: flex; align-items: center; justify-content: space-between; padding: 0 5px; }
.r1 .hs { height: 19px; }
.vs { flex: none; width: 17px; background: #f0f0f0; display: flex; flex-direction: column; align-items: center; padding-top: 8px; }
.al, .ar, .au, .ad { width: 0; height: 0; border: 4px solid transparent; flex: none; }
.al { border-right-color: #333; border-left: 0; } .ar { border-left-color: #333; border-right: 0; }
.au { border-bottom-color: #333; border-top: 0; } .ad { border-top-color: #333; border-bottom: 0; margin-top: auto; }
.th { flex: none; width: 15px; height: 15px; border: 1px solid #999; border-radius: 2px; background: linear-gradient(#f8f8f8, #cfcfcf); text-align: center; line-height: 13px; font-size: 9px; color: #444; }
.hs .th { margin: 0 auto 0 9px; } .hs .a1 { margin-left: 60px; }
.v1 { margin-top: 6px; } .v2 { margin-top: 130px; } .v4 { margin-top: 32px; } .v5 { margin-top: 6px; height: 24px; line-height: 22px; } .v6 { margin-top: 193px; }
.size { height: 17px; width: 10px; margin-top: 7px; background: radial-gradient(circle, #bbb 1px, transparent 1px) 0 0 / 4px 4px; clip-path: polygon(100% 0, 100% 100%, 0 100%); }
.hs .long { flex: 1; margin: 0 5px; }
.active .size { margin-top: 2px; }

.news th { height: 16px; font-weight: 400; font-size: 11px; padding-left: 6px; border-top: 0; border-bottom: 1px solid #aaa; }
.c1 { width: 157px; } .c2 { width: 57px; }
.list { flex: 0 0 157px; overflow: hidden; background: #fff; }
.list td { height: 17px; font-weight: 700; font-size: 12px; white-space: nowrap; padding: 3px 0 0 7px; line-height: 14px; }
.list td:first-child { padding: 0; }
.list td div { display: flex; align-items: center; height: 17px; padding: 0; }
.list time { font-size: 13px; margin-left: 5px; }
.news .hs { margin-bottom: 3px; box-shadow: 0 2px #999; }
.story { flex: 1; min-height: 0; display: flex; background: #fff; }
article { flex: 1; overflow: hidden; padding: 1px 0 0 1px; line-height: 14px; white-space: nowrap; }
p { margin: 0 0 14px; }
.mode { color: #4b5868; }
.chart .col { background: #d9e2eb; }
.plot { flex: 1; min-height: 0; width: 100%; }
.plot text { font-size: 11px; fill: #111; } .plot .r { text-anchor: end; } .plot .m { text-anchor: middle; }
.plot .now { fill: #0a0ad0; } .plot .dim { fill: #6a7787; }
.plot polyline { fill: none; } .dash { stroke: #7f8b98; stroke-dasharray: 4 3; }
.hs.classic { height: 13px; background: #f8f8f8; padding: 0; } .classic .th { width: 102px; height: 13px; border-radius: 0; margin: 0 0 0 auto; background: #f0f0f0; }
.bx { width: 16px; height: 13px; display: grid; place-items: center; background: #f0f0f0; border: 1px solid; border-color: #fff #777 #777 #fff; }

.book > header { height: 25px; padding-top: 2px; padding-right: 9px; }
.depth { flex: 1; } .b1 { width: 59px; } .b2 { width: 51px; } .b3 { width: 14px; }
.depth td { border-right: 1px solid #fff; color: #111; } .depth td div { padding-right: 4px; }
.ask td { background: #f45c66; } .bid td { background: #6c7da6; }
.ask + .bid td { border-top: 1px solid #222; } .ask + .bid td div { height: 14px; line-height: 14px; }
.entry { flex: 0 0 179px; background: #f0f0f0; padding: 0 6px 0 1px; }
.entry .hs { margin: 0 10px 4px 0; }
.ln { display: flex; height: 17px; align-items: center; }
.ln label { width: 12px; } .ln .q { margin-left: 5px; width: 11px; }
.ln .field { height: 17px; } .w58 { width: 58px; } .w48 { width: 48px; } .w108 { width: 108px; }
.ln.a, .ln.c { height: 27px; }
.keys { display: flex; gap: 7px; padding-left: 3px; height: 24px; } .keys button { width: 16px; height: 16px; border-radius: 3px; background: #999; }
.keys.small { padding-top: 1px; height: 21px; } .small button { position: relative; border: 1px solid #999; font-weight: 700; } .small .ico { width: 14px; height: 14px; }
.small .over { position: absolute; left: 0; bottom: 0; }
.small .p { background: #f8b8b8; color: #b03040; } .small .g { background: #b5eeb5; color: #306a30; }
.pos { margin: -2px 0 6px; } .ln.pos label { width: 28px; } .green { background: #b9ffb0; text-align: right; }
.cr { width: 17px; height: 17px; border: 1px solid #aaa; border-radius: 2px; background: #e4e8ee; font-weight: 700; font-size: 13px; margin-left: 6px; }
.cr.red { color: #c01830; } .cr.blue { color: #2060b0; }

.dialog { position: absolute; left: 343px; top: 396px; width: 436px; background: #f0f0f0; border: 1px solid #111; border-radius: 5px 5px 0 0; box-shadow: inset -1px -1px #58cbe0, inset 1px 0 #58cbe0; padding: 0 2px 2px 2px; }
.dialog header { display: flex; height: 22px; align-items: center; padding: 0 2px 0 4px; background: linear-gradient(#8fb0d4, #c4d6e8); font: 11px/16px "Open Sans", "Noto Sans", sans-serif; border-radius: 4px 4px 0 0; }
.dbody { display: flex; border-bottom: 1px solid #a8a8a8; height: 207px; }
.dleft { flex: none; width: 250px; border-right: 1px solid #a8a8a8; display: grid; grid-template-columns: 116px 118px; column-gap: 7px; grid-template-rows: 42px 53px 59px 44px; padding: 3px 0 0 3px; align-content: start; }
fieldset { min-width: 0; margin: 0; padding: 4px 5px 0; border: 1px solid #a8a8a8; box-shadow: 1px 1px #fff; }
legend { padding: 0 3px; height: 12px; line-height: 12px; }
.side { grid-column: 1 / 3; margin: 8px 0; border: 1px solid #a8a8a8; display: flex; align-items: center; padding-left: 18px; font-weight: 700; font-size: 12px; box-shadow: 1px 1px #fff; }
.side label { flex: none; display: flex; align-items: center; width: 123px; gap: 6px; }
.side label + label { width: auto; }
.tall { margin-top: -6px; height: 65px; }
.last { margin-top: 1px; height: 43px; }
input[type=radio] { appearance: none; width: 12px; height: 12px; border-radius: 50%; background: #fff; border: 1px solid #777; border-right-color: #ddd; border-bottom-color: #ddd; display: grid; place-items: center; flex: none; }
input[type=radio]:checked::after { content: ""; width: 4px; height: 4px; border-radius: 50%; background: #888; }
input[type=checkbox] { appearance: none; width: 12px; height: 12px; background: #fff; border: 2px solid #888; border-right: 1px solid #ddd; border-bottom: 1px solid #ddd; }
.spin { display: flex; gap: 2px; } .spin .field { flex: 1; } .b { font-weight: 700; font-size: 12px; }
.ud { width: 17px; display: grid; } .ud button { border: 1px solid; border-color: #fff #777 #777 #fff; display: grid; place-items: center; }
.ud button::after { content: ""; border: 2px solid transparent; border-top: 0; border-bottom-color: #000; } .ud .dn::after { border: 2px solid transparent; border-top-color: #000; border-bottom: 0; }
.qty { padding: 1px 2px; } .qty input { width: 8px; height: 14px; background: #3399ff; color: #fff; font-size: 12px; display: block; }
.check { display: flex; gap: 6px; align-items: center; margin-top: 10px; }
.btn { height: 20px; background: #f0f0f0; border: solid; border-width: 1px 2px 2px 1px; border-color: #fff #808080 #808080 #fff; display: block; }
fieldset .btn { width: 100%; margin-top: 5px; } .btn.lft { text-align: left; padding-left: 4px; }
fieldset > .field { width: 100%; display: block; }
.dright { flex: 1; min-width: 0; padding: 3px 3px 0 5px; display: flex; flex-direction: column; }
.kinds { height: 87px; color: #999; } .kinds label { display: flex; gap: 5px; height: 24px; align-items: center; }
.vol { margin-top: 2px; height: 65px; position: relative; } .com { position: absolute; left: 101px; top: -12px; padding: 0 3px; background: #f0f0f0; line-height: 12px; }
.two { display: flex; gap: 4px; } .two .field { flex: 91; width: 0; } .two .field + .field { flex: 67; }
footer { display: flex; padding: 5px 0 9px 36px; } footer .btn { width: 54px; height: 25px; } footer .ok { border: 2px solid; border-color: #999 #555 #555 #999; margin-right: 67px; } footer .less { width: 24px; margin-left: 11px; }
</style>
